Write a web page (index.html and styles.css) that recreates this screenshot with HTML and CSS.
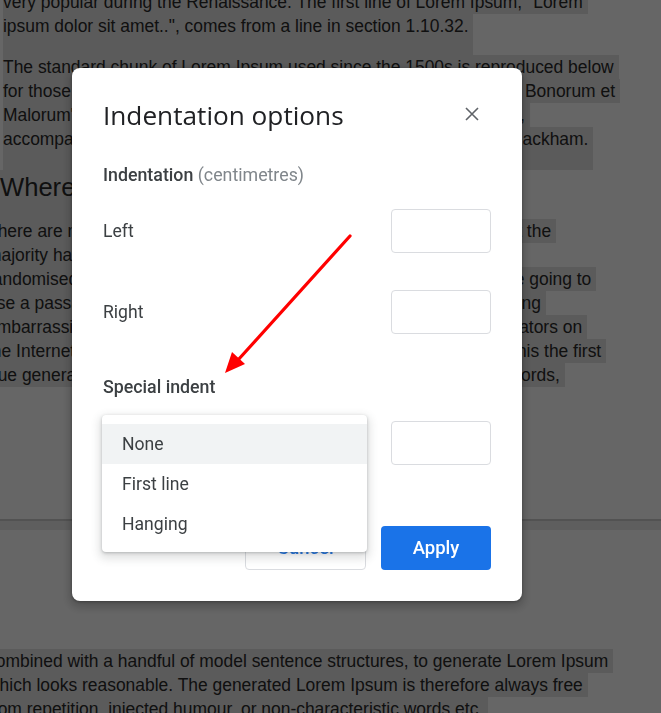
FILE: index.html
```html
<!DOCTYPE html>
<html lang="en">
<head>
<meta charset="utf-8">
<title>Indentation options</title>
<link rel="stylesheet" href="styles.css">
</head>
<body>
<div class="doc">
  <div class="page page1">
    <div class="para p-a">
      <div class="ln"><span class="hl">very popular during the Renaissance. The first line of Lorem Ipsum, "Lorem&nbsp;</span></div>
      <div class="ln"><span class="hl last-a">ipsum dolor sit amet..", comes from a line in section 1.10.32.&nbsp;</span></div>
    </div>
    <div class="para p-a">
      <div class="ln"><span class="hl">The standard chunk of Lorem Ipsum used since the 1500s is reproduced below&nbsp;</span></div>
      <div class="ln"><span class="hl">for those interested. Sections 1.10.32 and 1.10.33 from "de Finibus Bonorum et&nbsp;</span></div>
      <div class="ln"><span class="hl">Malorum" by Cicero are also reproduced in their exact original form,&nbsp;</span></div>
      <div class="ln"><span class="hl last-b">accompanied by English versions from the 1914 translation by H. Rackham.&nbsp;</span></div>
    </div>
    <div class="heading"><span class="hl hl-h">Where can I get some?&nbsp;</span></div>
    <div class="para p-b">
      <div class="ln"><span class="hl">There are many variations of passages of Lorem Ipsum available, but the&nbsp;</span></div>
      <div class="ln"><span class="hl">majority have suffered alteration in some form, by injected humour.&nbsp;</span></div>
      <div class="ln"><span class="hl">randomised words which don't look even slightly believable. If you are going to&nbsp;</span></div>
      <div class="ln"><span class="hl">use a passage of Lorem Ipsum, you need to be sure there isn't anything&nbsp;</span></div>
      <div class="ln"><span class="hl">embarrassing hidden in the middle of text. All the Lorem Ipsum generators on&nbsp;</span></div>
      <div class="ln"><span class="hl">the Internet tend to repeat predefined chunks as necessary, making this the first&nbsp;</span></div>
      <div class="ln"><span class="hl">true generator on the Internet. It uses a dictionary of over 200 Latin words,&nbsp;</span></div>
    </div>
  </div>
  <div class="page-gap"></div>
  <div class="page page2">
    <div class="para p-b">
      <div class="ln"><span class="hl">combined with a handful of model sentence structures, to generate Lorem Ipsum&nbsp;</span></div>
      <div class="ln"><span class="hl">which looks reasonable. The generated Lorem Ipsum is therefore always free&nbsp;</span></div>
      <div class="ln"><span class="hl">from repetition, injected humour, or non-characteristic words etc.&nbsp;</span></div>
    </div>
  </div>
</div>

<div class="scrim"></div>

<div class="dialog" role="dialog" aria-label="Indentation options">
  <div class="dlg-head">
    <h1 class="title">Indentation options</h1>
    <button class="close" aria-label="Close">
      <svg width="14" height="14" viewBox="0 0 14 14"><path d="M1 1L13 13M13 1L1 13" stroke="#5f6368" stroke-width="1.6" fill="none"/></svg>
    </button>
  </div>
  <div class="section-label"><span class="strong">Indentation</span> <span class="muted">(centimetres)</span></div>
  <div class="row row-left"><span class="lbl">Left</span><div class="input"></div></div>
  <div class="row row-right"><span class="lbl">Right</span><div class="input"></div></div>
  <div class="section-label special"><span class="strong">Special indent</span></div>
  <div class="row row-special">
    <div class="select">
      <div class="menu">
        <div class="item active">None</div>
        <div class="item">First line</div>
        <div class="item">Hanging</div>
      </div>
    </div>
    <div class="input"></div>
  </div>
  <div class="actions">
    <button class="btn cancel">Cancel</button>
    <button class="btn apply">Apply</button>
  </div>
</div>

<svg class="arrow" width="661" height="713" viewBox="0 0 661 713">
  <line x1="350" y1="236" x2="238" y2="360" stroke="#ff0000" stroke-width="3.2" stroke-linecap="round"/>
  <polygon points="225,373 232,352 245,364" fill="#ff0000"/>
</svg>
</body>
</html>
```

FILE: styles.css
```css
html, body {
  margin: 0;
  padding: 0;
}
body {
  width: 661px;
  height: 713px;
  overflow: hidden;
  background: #ffffff;
  font-family: "Liberation Sans", Arial, sans-serif;
}

/* ---------- document behind the dialog ---------- */
.doc {
  display: flex;
  flex-direction: column;
}
.page {
  background: #ffffff;
  color: #2a2a2a;
  font-size: 17.45px;
}
.page1 {
  margin-top: -10px;
  padding-bottom: 132px;
}
.page2 {
  padding-top: 119px;
}
.page-gap {
  height: 9px;
  background: #ececec;
  border-top: 2px solid #cdcdcd;
}
.para {
  display: flex;
  flex-direction: column;
}
.p-a {
  margin-left: 3px;
}
.p-b {
  margin-left: -13px;
}
.ln {
  white-space: nowrap;
  display: flex;
}
.hl {
  display: inline-block;
  height: 24px;
  line-height: 24px;
  background: #e3e3e3;
  white-space: nowrap;
}
.last-a {
  padding-bottom: 17px;
}
.last-b {
  padding-bottom: 19px;
}
.heading {
  display: flex;
  margin-left: -2px;
}
.hl-h {
  font-size: 25.6px;
  height: 49px;
  line-height: 34px;
  padding-left: 2px;
}

/* ---------- scrim ---------- */
.scrim {
  position: fixed;
  inset: 0;
  background: rgba(0, 0, 0, 0.6);
}

/* ---------- dialog ---------- */
.dialog {
  position: fixed;
  left: 72px;
  top: 68px;
  width: 450px;
  height: 533px;
  box-sizing: border-box;
  padding: 29px 31px 31px;
  background: #ffffff;
  border-radius: 8px;
  box-shadow: 0 4px 8px 3px rgba(0, 0, 0, 0.18), 0 1px 3px rgba(0, 0, 0, 0.3);
  display: flex;
  flex-direction: column;
  font-family: Roboto, "Noto Sans", sans-serif;
  color: #3c4043;
}
.dlg-head {
  height: 36px;
  display: flex;
  align-items: center;
  justify-content: space-between;
}
.title {
  margin: 0;
  font-family: "Open Sans", Roboto, sans-serif;
  font-weight: 400;
  font-size: 26.2px;
  color: #202124;
  line-height: 36px;
}
.close {
  width: 26px;
  height: 26px;
  margin-right: 6px;
  margin-top: -2px;
  padding: 0;
  border: 0;
  background: transparent;
  display: flex;
  align-items: center;
  justify-content: center;
}
.section-label {
  margin-top: 30px;
  line-height: 24px;
  font-size: 17.8px;
}
.section-label.special {
  margin-top: 41px;
}
.strong {
  font-weight: 500;
  color: #3c4043;
}
.muted {
  color: #80868b;
}
.row {
  height: 44px;
  display: flex;
  align-items: center;
  justify-content: space-between;
  margin-top: 22px;
}
.row-right {
  margin-top: 37px;
}
.lbl {
  font-size: 17.6px;
  color: #3c4043;
}
.input {
  width: 100px;
  height: 44px;
  box-sizing: border-box;
  border: 1px solid #dadce0;
  border-radius: 4px;
}
.select {
  position: relative;
  width: 265px;
  height: 44px;
}
.menu {
  position: absolute;
  left: -1px;
  top: -6px;
  width: 265px;
  padding: 9px 0 8px;
  background: #ffffff;
  border-radius: 4px;
  box-shadow: 0 1px 3px rgba(60, 64, 67, 0.3), 0 4px 8px 3px rgba(60, 64, 67, 0.15);
  z-index: 2;
}
.item {
  height: 40px;
  line-height: 40px;
  padding-left: 20px;
  font-size: 17.6px;
  color: #3c4043;
}
.item.active {
  background: #f1f3f4;
}
.actions {
  margin-top: 61px;
  display: flex;
  justify-content: flex-end;
  gap: 15px;
}
.btn {
  height: 44px;
  border-radius: 4px;
  font-family: Roboto, "Noto Sans", sans-serif;
  font-size: 18.5px;
  font-weight: 500;
  padding: 0;
}
.cancel {
  width: 121px;
  background: #ffffff;
  border: 1px solid #dadce0;
  color: #1a73e8;
}
.apply {
  width: 110px;
  background: #1a73e8;
  border: 0;
  color: #ffffff;
}

/* ---------- annotation arrow ---------- */
.arrow {
  position: fixed;
  left: 0;
  top: 0;
  z-index: 5;
  pointer-events: none;
}
```
